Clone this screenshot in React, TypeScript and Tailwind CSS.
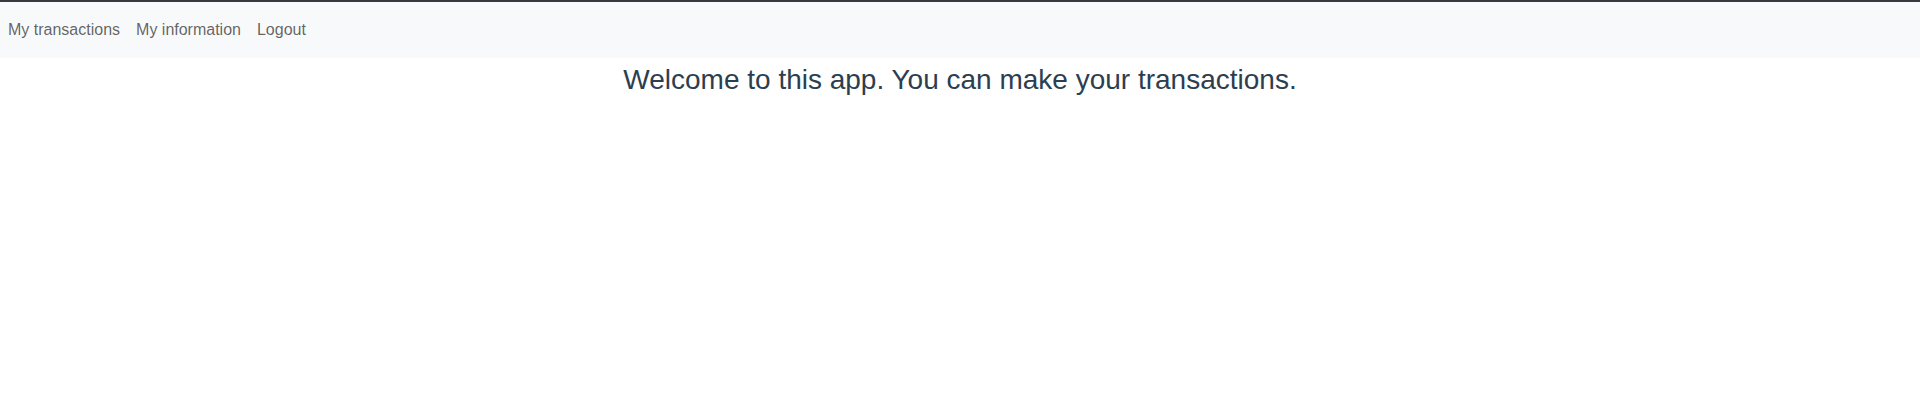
export default function App() {
  const links = ["My transactions", "My information", "Logout"];

  return (
    <div className="min-h-[409px] bg-white font-['Liberation_Sans',Arial,sans-serif]">
      <nav className="border-t-2 border-[#343a40] bg-[#f8f9fa] py-2">
        <ul className="flex">
          {links.map((name) => (
            <li key={name}>
              <a
                href="#"
                className="block px-2 py-2 text-base leading-6 text-[rgba(0,0,0,0.62)]"
              >
                {name}
              </a>
            </li>
          ))}
        </ul>
      </nav>
      <h3 className="mt-[5px] text-center text-[28px] leading-[1.2] font-normal text-[#2c3e50]">
        Welcome to this app. You can make your transactions.
      </h3>
    </div>
  );
}
